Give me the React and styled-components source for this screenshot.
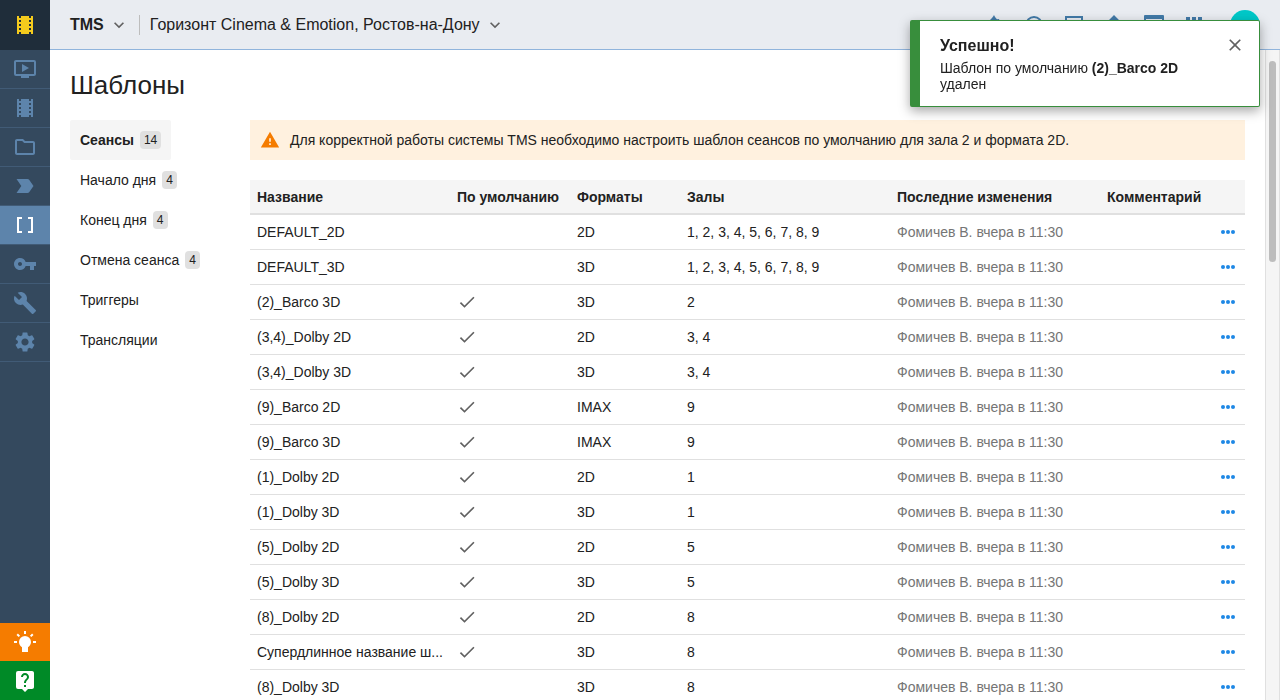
import styled, { createGlobalStyle } from "styled-components";
import {
  MdApps,
  MdBuild,
  MdCheck,
  MdClose,
  MdExpandMore,
  MdLabelImportant,
  MdLiveHelp,
  MdOndemandVideo,
  MdOutlineFolder,
  MdSettings,
  MdVpnKey,
  MdWarning,
} from "react-icons/md";

const GlobalStyle = createGlobalStyle`
  * {
    box-sizing: border-box;
  }

  body {
    margin: 0;
    color: #212121;
    background-color: white;
    font-family: "Liberation Sans", Arial, sans-serif;
    font-size: 14px;
    line-height: 16px;
  }

  button {
    padding: 0;
    border: none;
    background: none;
    color: inherit;
    font: inherit;
    cursor: pointer;
  }

  a {
    color: inherit;
    text-decoration: none;
  }

  svg {
    display: block;
    flex: none;
  }
`;

const Layout = styled.div`
  display: flex;
  height: 100vh;
  overflow: hidden;
`;

const Sidebar = styled.nav`
  display: flex;
  flex-direction: column;
  flex: none;
  width: 50px;
  background-color: #34495e;
`;

const Logo = styled.a`
  display: flex;
  align-items: center;
  justify-content: center;
  height: 50px;
  color: #f5cb1d;
  background-color: #1f2d3a;
`;

const NavLink = styled.a`
  display: flex;
  align-items: center;
  justify-content: center;
  height: 39px;
  border-bottom: 1px solid #415b76;
  color: ${(props) => (props.$active ? "white" : "#5d84ab")};
  background-color: ${(props) => (props.$active ? "#5d84ab" : "transparent")};
`;

const SidebarFooter = styled.div`
  display: flex;
  flex-direction: column;
  margin-top: auto;
`;

const FooterButton = styled.button`
  display: flex;
  align-items: center;
  justify-content: center;
  height: ${(props) => props.$height};
  color: white;
  background-color: ${(props) => props.$color};
`;

const Main = styled.div`
  display: flex;
  flex-direction: column;
  flex: 1;
  min-width: 0;
`;

const Header = styled.header`
  display: flex;
  align-items: center;
  flex: none;
  height: 50px;
  padding: 1px 20px 0;
  border-bottom: 1px solid #90b4dc;
  background-color: #e9ecf1;
`;

const HeaderMenu = styled.button`
  display: flex;
  align-items: center;
  gap: 5px;
  font-size: 16px;
  font-weight: ${(props) => (props.$bold ? 700 : 400)};
  line-height: 20px;

  svg {
    color: #616161;
  }
`;

const Divider = styled.div`
  width: 1px;
  height: 20px;
  margin: 0 10px;
  background-color: #bdbdbd;
`;

const HeaderActions = styled.div`
  display: flex;
  align-items: center;
  gap: 16px;
  margin-left: auto;
  color: #427aa8;
`;

const Avatar = styled.button`
  width: 30px;
  height: 30px;
  margin-left: 8px;
  border-radius: 50%;
  background-color: #00c8c8;
`;

const Body = styled.div`
  display: flex;
  flex: 1;
  min-height: 0;
`;

const Page = styled.main`
  flex: 1;
  min-width: 0;
  padding: 20px;
  overflow: hidden;
`;

const Title = styled.h1`
  margin: 0 0 20px;
  font-size: 26px;
  font-weight: 400;
  line-height: 30px;
`;

const Columns = styled.div`
  display: flex;
`;

const Tabs = styled.div`
  display: flex;
  flex-direction: column;
  align-items: flex-start;
  flex: none;
  width: 180px;
`;

const Tab = styled.a`
  display: flex;
  align-items: center;
  gap: 6px;
  height: 40px;
  padding: 0 10px;
  border-radius: 2px;
  font-weight: ${(props) => (props.$active ? 700 : 400)};
  background-color: ${(props) => (props.$active ? "#f5f5f5" : "transparent")};
`;

const Count = styled.span`
  padding: 0 4px;
  border-radius: 4px;
  font-size: 12px;
  font-weight: 400;
  line-height: 18px;
  background-color: #e0e0e0;
`;

const Content = styled.section`
  flex: 1;
  min-width: 0;
`;

const Warning = styled.div`
  display: flex;
  align-items: center;
  gap: 10px;
  height: 40px;
  margin-bottom: 20px;
  padding: 0 10px;
  background-color: #fff1df;

  svg {
    color: #f57c00;
  }
`;

const Table = styled.table`
  width: 100%;
  border-collapse: separate;
  border-spacing: 0;
  table-layout: fixed;
`;

const HeadCell = styled.th`
  width: ${(props) => props.$width};
  height: 35px;
  padding: 0 0 0 7px;
  border-bottom: 2px solid #e0e0e0;
  text-align: left;
  white-space: nowrap;
  background-color: #f5f5f5;
`;

const Cell = styled.td`
  height: 35px;
  padding: 0 7px;
  border-bottom: 1px solid #e0e0e0;
  overflow: hidden;
  text-overflow: ellipsis;
  white-space: nowrap;
  color: ${(props) => (props.$muted ? "#757575" : "inherit")};

  svg {
    color: #616161;
  }
`;

const MoreButton = styled.button`
  display: block;
  margin-left: auto;
  color: #1e88e5;

  svg {
    color: inherit;
  }
`;

const ScrollTrack = styled.div`
  flex: none;
  width: 15px;
  padding: 11px 3px;
  border: solid #e0e0e0;
  border-width: 0 1px;
  background-color: #f5f5f5;
`;

const ScrollThumb = styled.div`
  height: 32%;
  border-radius: 4px;
  background-color: #bdbdbd;
`;

const Toast = styled.div`
  position: fixed;
  top: 20px;
  right: 20px;
  display: flex;
  align-items: flex-start;
  width: 350px;
  padding: 14px 14px 14px 20px;
  border: 1px solid #388e3c;
  border-left-width: 10px;
  border-radius: 2px;
  background-color: white;
  box-shadow: 0 4px 12px rgba(0, 0, 0, 0.35);
`;

const ToastBody = styled.div`
  flex: 1;
  padding-right: 20px;
`;

const ToastTitle = styled.div`
  margin-bottom: 3px;
  font-size: 16px;
  font-weight: 700;
  line-height: 22px;
`;

const CloseButton = styled.button`
  color: #616161;
`;

function Icon({ path, size = 24 }) {
  return (
    <svg width={size} height={size} viewBox="0 0 24 24" fill="currentColor">
      <path fillRule="evenodd" d={path} />
    </svg>
  );
}

const film =
  "M18 9h-2V7h2m0 6h-2v-2h2m0 6h-2v-2h2M8 9H6V7h2m0 6H6v-2h2m0 6H6v-2h2m10-12v2h-2V3H8v2H6V3H4v18h2v-2h2v2h8v-2h2v2h2V3h-2z";
const brackets = "M15 4v2h3v12h-3v2h5V4M4 4v16h5v-2H6V6h3V4H4z";
const bulb =
  "M12 6a6 6 0 0 1 6 6c0 2.22-1.21 4.16-3 5.2V22H9v-4.8c-1.79-1.04-3-2.98-3-5.2a6 6 0 0 1 6-6zm8 5h3v2h-3v-2zM1 11h3v2H1v-2zM13 1v3h-2V1h2zM4.92 3.5l2.13 2.14-1.42 1.41L3.5 4.93 4.92 3.5zm12.03 2.13 2.12-2.13 1.43 1.43-2.13 2.12-1.42-1.42z";
const spark =
  "M12 2c.8 1.6 1.6 3 3 4.2L17 6l1 3c1 1.200 2 3 2 5a8 8 0 0 1-16 0c0-3 2-5 4-7 1.800-1.600 3.200-3.200 4-5z";
const ring = "M12 3a9 9 0 1 1 0 18 9 9 0 0 1 0-18zm0 2a7 7 0 1 0 0 14 7 7 0 0 0 0-14z";
const screen = "M3 3h18v16H3V3zm2 2v12h14V5H5z";
const upload = "M12 2l7 7h-4v7H9V9H5l7-7zM5 18h14v2H5v-2z";
const panel = "M3 2h18a1 1 0 0 1 1 1v17a1 1 0 0 1-1 1H3a1 1 0 0 1-1-1V3a1 1 0 0 1 1-1zm1 4v13h16V6H4z";

function MoreIcon() {
  return (
    <svg width="20" height="20" viewBox="0 0 20 20" fill="currentColor">
      <circle cx="5" cy="10" r="2" />
      <circle cx="10" cy="10" r="2" />
      <circle cx="15" cy="10" r="2" />
    </svg>
  );
}

const navigation = [
  { label: "Показ", icon: <MdOndemandVideo size={24} /> },
  { label: "Фильмы", icon: <Icon path={film} /> },
  { label: "Контент", icon: <MdOutlineFolder size={24} /> },
  { label: "События", icon: <MdLabelImportant size={24} /> },
  { label: "Шаблоны", icon: <Icon path={brackets} />, active: true },
  { label: "Ключи", icon: <MdVpnKey size={24} /> },
  { label: "Обслуживание", icon: <MdBuild size={24} /> },
  { label: "Настройки", icon: <MdSettings size={24} /> },
];

const tabs = [
  { name: "Сеансы", count: 14, active: true },
  { name: "Начало дня", count: 4 },
  { name: "Конец дня", count: 4 },
  { name: "Отмена сеанса", count: 4 },
  { name: "Триггеры" },
  { name: "Трансляции" },
];

const templates = [
  { name: "DEFAULT_2D", format: "2D", halls: "1, 2, 3, 4, 5, 6, 7, 8, 9" },
  { name: "DEFAULT_3D", format: "3D", halls: "1, 2, 3, 4, 5, 6, 7, 8, 9" },
  { name: "(2)_Barco 3D", isDefault: true, format: "3D", halls: "2" },
  { name: "(3,4)_Dolby 2D", isDefault: true, format: "2D", halls: "3, 4" },
  { name: "(3,4)_Dolby 3D", isDefault: true, format: "3D", halls: "3, 4" },
  { name: "(9)_Barco 2D", isDefault: true, format: "IMAX", halls: "9" },
  { name: "(9)_Barco 3D", isDefault: true, format: "IMAX", halls: "9" },
  { name: "(1)_Dolby 2D", isDefault: true, format: "2D", halls: "1" },
  { name: "(1)_Dolby 3D", isDefault: true, format: "3D", halls: "1" },
  { name: "(5)_Dolby 2D", isDefault: true, format: "2D", halls: "5" },
  { name: "(5)_Dolby 3D", isDefault: true, format: "3D", halls: "5" },
  { name: "(8)_Dolby 2D", isDefault: true, format: "2D", halls: "8" },
  { name: "Супердлинное название ш...", isDefault: true, format: "3D", halls: "8" },
  { name: "(8)_Dolby 3D", format: "3D", halls: "8" },
];

function TemplatesTable() {
  return (
    <Table>
      <thead>
        <tr>
          <HeadCell $width="200px">Название</HeadCell>
          <HeadCell $width="120px">По умолчанию</HeadCell>
          <HeadCell $width="110px">Форматы</HeadCell>
          <HeadCell $width="210px">Залы</HeadCell>
          <HeadCell $width="210px">Последние изменения</HeadCell>
          <HeadCell>Комментарий</HeadCell>
          <HeadCell $width="40px" aria-label="Действия" />
        </tr>
      </thead>
      <tbody>
        {templates.map((template) => (
          <tr key={template.name}>
            <Cell>{template.name}</Cell>
            <Cell>
              {template.isDefault ? <MdCheck size={20} title="Да" /> : null}
            </Cell>
            <Cell>{template.format}</Cell>
            <Cell>{template.halls}</Cell>
            <Cell $muted>Фомичев В. вчера в 11:30</Cell>
            <Cell />
            <Cell>
              <MoreButton aria-label="Действия">
                <MoreIcon />
              </MoreButton>
            </Cell>
          </tr>
        ))}
      </tbody>
    </Table>
  );
}

function App() {
  return (
    <>
      <GlobalStyle />
      <Layout>
        <Sidebar>
          <Logo href="#" aria-label="TMS">
            <Icon path={film} />
          </Logo>
          {navigation.map(({ label, icon, active }) => (
            <NavLink key={label} href="#" aria-label={label} $active={active}>
              {icon}
            </NavLink>
          ))}
          <SidebarFooter>
            <FooterButton $height="38px" $color="#f57c00" aria-label="Идеи">
              <Icon path={bulb} />
            </FooterButton>
            <FooterButton $height="39px" $color="#008a27" aria-label="Помощь">
              <MdLiveHelp size={24} />
            </FooterButton>
          </SidebarFooter>
        </Sidebar>

        <Main>
          <Header>
            <HeaderMenu $bold>
              TMS
              <MdExpandMore size={20} />
            </HeaderMenu>
            <Divider />
            <HeaderMenu>
              Горизонт Cinema &amp; Emotion, Ростов-на-Дону
              <MdExpandMore size={20} />
            </HeaderMenu>
            <HeaderActions>
              <Icon path={spark} />
              <Icon path={ring} />
              <Icon path={screen} />
              <Icon path={upload} />
              <Icon path={panel} />
              <MdApps size={24} />
              <Avatar aria-label="Профиль" />
            </HeaderActions>
          </Header>

          <Body>
            <Page>
              <Title>Шаблоны</Title>
              <Columns>
                <Tabs>
                  {tabs.map(({ name, count, active }) => (
                    <Tab key={name} href="#" $active={active}>
                      {name}
                      {count ? <Count>{count}</Count> : null}
                    </Tab>
                  ))}
                </Tabs>
                <Content>
                  <Warning>
                    <MdWarning size={20} />
                    Для корректной работы системы TMS необходимо настроить
                    шаблон сеансов по умолчанию для зала 2 и формата 2D.
                  </Warning>
                  <TemplatesTable />
                </Content>
              </Columns>
            </Page>
            <ScrollTrack>
              <ScrollThumb />
            </ScrollTrack>
          </Body>
        </Main>
      </Layout>

      <Toast role="status">
        <ToastBody>
          <ToastTitle>Успешно!</ToastTitle>
          Шаблон по умолчанию <b>(2)_Barco 2D</b> удален
        </ToastBody>
        <CloseButton aria-label="Закрыть">
          <MdClose size={20} />
        </CloseButton>
      </Toast>
    </>
  );
}

export default App;
